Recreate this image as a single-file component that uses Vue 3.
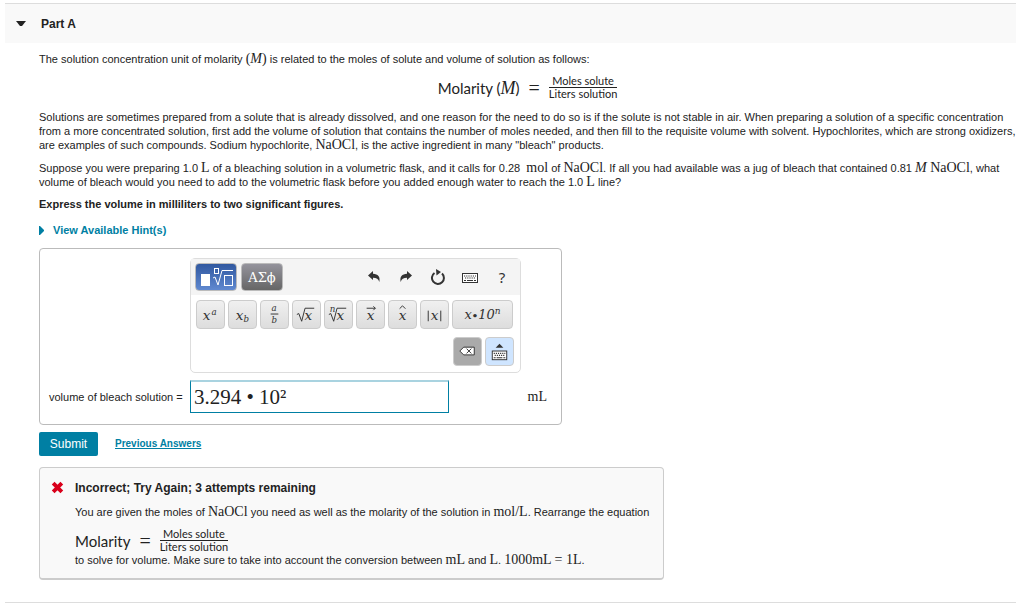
<script setup>
import { ref } from 'vue'

const answer = ref('3.294 • 10²')
</script>

<template>
  <main class="page">
    <header class="part">
      <svg class="part__arrow" viewBox="0 0 10 6" aria-hidden="true">
        <path d="M0 0h10L6 5H4z" fill="#222" />
      </svg>
      <h1 class="part__title">Part A</h1>
    </header>

    <div class="content">
      <p class="text">
        The solution concentration unit of molarity <span class="math">(<i>M</i>)</span> is related to the moles of
        solute and volume of solution as follows:
      </p>

      <div class="equation equation--center">
        <span class="equation__name">Molarity (<i>M</i>)</span>
        <span class="equation__equals">=</span>
        <span class="fraction">
          <span class="fraction__top">Moles solute</span>
          <span class="fraction__bottom">Liters solution</span>
        </span>
      </div>

      <p class="text">
        Solutions are sometimes prepared from a solute that is already dissolved, and one reason for the need to do so
        is if the solute is not stable in air. When preparing a solution of a specific concentration from a more
        concentrated solution, first add the volume of solution that contains the number of moles needed, and then fill
        to the requisite volume with solvent. Hypochlorites, which are strong oxidizers, are examples of such compounds.
        Sodium hypochlorite, <span class="math">NaOCl</span>, is the active ingredient in many "bleach" products.
      </p>

      <p class="text text--spaced">
        Suppose you were preparing 1.0 <span class="math">L</span> of a bleaching solution in a volumetric flask, and it
        calls for 0.28 &nbsp;<span class="math">mol</span> of <span class="math">NaOCl</span>. If all you had available
        was a jug of bleach that contained 0.81 <span class="math"><i>M</i> NaOCl</span>, what volume of bleach would
        you need to add to the volumetric flask before you added enough water to reach the 1.0
        <span class="math">L</span> line?
      </p>

      <p class="text text--bold">Express the volume in milliliters to two significant figures.</p>

      <a class="hints" href="#hints">
        <svg class="hints__arrow" viewBox="0 0 5 9" aria-hidden="true">
          <path d="M0 0h1l4 4v1L1 9H0z" fill="#007fa3" />
        </svg>
        View Available Hint(s)
      </a>

      <section class="answer">
        <div class="palette">
          <div class="palette__bar">
            <button type="button" class="mode mode--active" aria-label="Templates">
              <svg width="40" height="26" viewBox="0 0 40 26">
                <rect x="5" y="10" width="9" height="12" fill="#fff" />
                <g fill="none" stroke="#fff">
                  <rect x="18.500" y="4.500" width="4" height="5" />
                  <path d="M17 14l2-1 3 8 4-14.500h11" />
                  <rect x="28.500" y="11.500" width="8" height="10" />
                </g>
              </svg>
            </button>
            <button type="button" class="mode">ΑΣϕ</button>

            <div class="tools">
              <button type="button" class="tool" aria-label="Undo">
                <svg width="14" height="14" viewBox="0 0 14 14">
                  <path d="M1 5.500L6 1v2.800c5 .2 7.500 3 6.300 8.200C11.500 9.200 9.500 7.800 6 7.800V10z" fill="#333" />
                </svg>
              </button>
              <button type="button" class="tool" aria-label="Redo">
                <svg width="14" height="14" viewBox="0 0 14 14">
                  <path d="M13 5.500L8 1v2.800c-5 .2-7.500 3-6.300 8.200C2.500 9.200 4.500 7.800 8 7.800V10z" fill="#333" />
                </svg>
              </button>
              <button type="button" class="tool" aria-label="Reset">
                <svg width="16" height="16" viewBox="0 0 16 16">
                  <path d="M4.500 4a6 6 0 1 0 7.500.5" fill="none" stroke="#333" stroke-width="2" />
                  <path d="M6 0l5 3-4.500 3.500z" fill="#333" />
                </svg>
              </button>
              <button type="button" class="tool" aria-label="Keyboard shortcuts">
                <svg width="18" height="14" viewBox="0 0 18 14">
                  <rect x="1.500" y="3.500" width="15" height="9" fill="#fff" stroke="#333" />
                  <path d="M3 6h12M4 8h11" stroke="#333" stroke-width="1.200" stroke-dasharray="1.200 1" />
                  <path d="M3 10.500h2M6 10.500h6M13 10.500h2" stroke="#333" stroke-width="1.200" />
                </svg>
              </button>
              <button type="button" class="tool" aria-label="Help">?</button>
            </div>
          </div>

          <div class="palette__keys">
            <button type="button" class="key">
              <svg viewBox="0 0 28 28">
                <text x="6" y="20" class="glyph">x</text>
                <text x="15" y="14" class="glyph glyph--small">a</text>
              </svg>
            </button>
            <button type="button" class="key">
              <svg viewBox="0 0 28 28">
                <text x="7" y="20" class="glyph">x</text>
                <text x="15" y="22" class="glyph glyph--small">b</text>
              </svg>
            </button>
            <button type="button" class="key">
              <svg viewBox="0 0 28 28">
                <text x="11" y="10" class="glyph glyph--small">a</text>
                <path d="M10 13.500h8" stroke="#333" />
                <text x="11" y="23" class="glyph glyph--small">b</text>
              </svg>
            </button>
            <button type="button" class="key">
              <svg viewBox="0 0 28 28">
                <path d="M4 14l2-1 3 8L12.500 7.500H22" fill="none" stroke="#333" />
                <text x="12" y="20" class="glyph">x</text>
              </svg>
            </button>
            <button type="button" class="key">
              <svg viewBox="0 0 28 28">
                <text x="5" y="11" class="glyph glyph--small">n</text>
                <path d="M4 14l2-1 3 8L12.500 7.500H22" fill="none" stroke="#333" />
                <text x="12" y="20" class="glyph">x</text>
              </svg>
            </button>
            <button type="button" class="key">
              <svg viewBox="0 0 28 28">
                <path d="M10 7.500h9M17 5.500l2 2-2 2" fill="none" stroke="#333" />
                <text x="10" y="20" class="glyph">x</text>
              </svg>
            </button>
            <button type="button" class="key">
              <svg viewBox="0 0 28 28">
                <path d="M11 8l3-3 3 3" fill="none" stroke="#333" />
                <text x="10" y="20" class="glyph">x</text>
              </svg>
            </button>
            <button type="button" class="key">
              <svg viewBox="0 0 28 28">
                <path d="M7.500 10v11M20.500 10v11" stroke="#333" />
                <text x="10" y="20" class="glyph">x</text>
              </svg>
            </button>
            <button type="button" class="key key--wide">x<b>•</b>10<sup>n</sup></button>
          </div>

          <div class="palette__keys palette__keys--end">
            <button type="button" class="key key--delete" aria-label="Delete">
              <svg viewBox="0 0 28 28">
                <path d="M6 13.500L10 9.500h11v8H10z" fill="#fff" stroke="#333" />
                <path d="M13 11l5 5M18 11l-5 5" stroke="#333" />
              </svg>
            </button>
            <button type="button" class="key key--keyboard" aria-label="Toggle keyboard">
              <svg viewBox="0 0 28 28">
                <path d="M10 10l4-4 4 4z" fill="#333" />
                <rect x="6.500" y="13.500" width="15" height="9" fill="#fff" stroke="#333" />
                <path d="M8 16h12M9 18h11" stroke="#333" stroke-width="1.200" stroke-dasharray="1.200 1" />
                <path d="M8 20.500h2M11 20.500h6M18 20.500h2" stroke="#333" stroke-width="1.200" />
              </svg>
            </button>
          </div>
        </div>

        <div class="answer__row">
          <label class="answer__label" for="volume">volume of bleach solution =</label>
          <input id="volume" v-model="answer" class="answer__input" type="text" />
          <span class="answer__unit">mL</span>
        </div>
      </section>

      <div class="actions">
        <button type="button" class="submit">Submit</button>
        <a class="previous" href="#previous">Previous Answers</a>
      </div>

      <section class="feedback">
        <svg class="feedback__icon" viewBox="0 0 12 12" aria-hidden="true">
          <path d="M2 2l8 8M10 2l-8 8" stroke="#d9001b" stroke-width="3.600" />
        </svg>
        <div class="feedback__body">
          <h2 class="feedback__title">Incorrect; Try Again; 3 attempts remaining</h2>
          <p class="text">
            You are given the moles of <span class="math">NaOCl</span> you need as well as the molarity of the solution
            in <span class="math">mol/L</span>. Rearrange the equation
          </p>
          <div class="equation equation--feedback">
            <span class="equation__name">Molarity</span>
            <span class="equation__equals">=</span>
            <span class="fraction">
              <span class="fraction__top">Moles solute</span>
              <span class="fraction__bottom">Liters solution</span>
            </span>
          </div>
          <p class="text">
            to solve for volume. Make sure to take into account the conversion between <span class="math">mL</span> and
            <span class="math">L</span>. <span class="math">1000mL = 1L</span>.
          </p>
        </div>
      </section>
    </div>
  </main>
</template>

<style>
body {
  background: #fff;
}
</style>

<style scoped>
.page {
  margin: 3px 8px 0 5px;
  border-top: 1px solid #ddd;
  border-bottom: 1px solid #ddd;
  font-family: 'Liberation Sans', Arial, sans-serif;
  font-size: 11px;
  line-height: 14px;
  color: #222;
}

.page * {
  box-sizing: border-box;
}

.part {
  display: flex;
  align-items: center;
  gap: 15px;
  height: 39px;
  padding-left: 11px;
  background: #f9f9f9;
}

.part__arrow {
  width: 10px;
  height: 6px;
}

.part__title {
  margin: 0;
  font-size: 12px;
}

.content {
  padding: 9px 0 22px 34px;
}

.text {
  margin: 0;
}

.text--spaced {
  margin: 9px 0 8px;
}

.text--bold {
  font-weight: 700;
}

.math {
  font-family: 'Liberation Serif', serif;
  font-size: 14px;
  line-height: 0;
}

.equation {
  display: flex;
  align-items: center;
  font-family: Lato, sans-serif;
}

.equation--center {
  justify-content: center;
  margin: 9px 0 10px;
}

.equation--feedback {
  margin: 9px 0 0;
}

.equation__name {
  font-size: 15px;
}

.equation__name i {
  font-family: 'Liberation Serif', serif;
  font-size: 18px;
  line-height: 0;
}

.equation__equals {
  margin: 0 9px;
  font-family: 'Liberation Serif', serif;
  font-size: 20px;
}

.fraction {
  display: flex;
  flex-direction: column;
  text-align: center;
  line-height: 12px;
}

.fraction__top {
  border-bottom: 1px solid #222;
}

.hints {
  display: flex;
  align-items: center;
  gap: 9px;
  margin: 12px 0 11px;
  color: #007fa3;
  font-weight: 700;
  text-decoration: none;
}

.hints__arrow {
  width: 5px;
  height: 9px;
}

.answer {
  max-width: 523px;
  padding: 9px 9px 11px;
  border: 1px solid #bbb;
  border-radius: 4px;
}

.palette {
  width: 331px;
  margin: 0 0 7px 141px;
  padding-bottom: 6px;
  border: 1px solid #ddd;
  border-radius: 5px;
}

.palette__bar {
  display: flex;
  align-items: center;
  gap: 4px;
  height: 36px;
  padding: 0 2px 0 4px;
  background: #f4f4f4;
}

.mode {
  width: 42px;
  height: 28px;
  padding: 0;
  border: 1px solid #bbb;
  border-radius: 4px;
  background: linear-gradient(#94939c, #666);
  color: #fff;
  font-family: 'DejaVu Serif', serif;
  font-size: 13px;
}

.mode svg,
.tool svg,
.key svg {
  display: block;
  margin: auto;
}

.mode--active {
  background: linear-gradient(#3058a0, #6089d0);
}

.tools {
  display: flex;
  margin-left: auto;
}

.tool {
  width: 32px;
  height: 28px;
  padding: 0;
  border: 0;
  background: none;
  color: #333;
  font-family: 'Noto Sans', sans-serif;
  font-size: 15px;
}

.palette__keys {
  display: flex;
  gap: 3px;
  padding: 5px 5px 0;
}

.palette__keys--end {
  justify-content: flex-end;
  padding: 8px 6px 0;
}

.key {
  width: 29px;
  height: 29px;
  padding: 0;
  border: 1px solid #ccc;
  border-radius: 4px;
  background: linear-gradient(#f0f0f0, #ddd);
  color: #333;
}

.key--wide {
  width: 61px;
  font-family: 'DejaVu Serif', serif;
  font-size: 13px;
  font-style: italic;
}

.key--wide b {
  font-size: 10px;
}

.key--wide sup {
  font-size: 9px;
  line-height: 0;
}

.key--delete {
  background: #aaa;
}

.key--keyboard {
  background: #cfe5ff;
}

.glyph {
  fill: #333;
  font-family: 'DejaVu Serif', serif;
  font-size: 14px;
  font-style: italic;
}

.glyph--small {
  font-size: 9px;
}

.answer__row {
  display: flex;
  align-items: center;
}

.answer__label {
  width: 141px;
}

.answer__input {
  width: 259px;
  height: 33px;
  padding: 0 3px;
  border: 1px solid #007fa3;
  border-top: 2px solid #a9d3e0;
  outline: none;
  color: #222;
  font-family: 'Liberation Serif', serif;
  font-size: 21px;
}

.answer__unit {
  margin-left: auto;
  padding-right: 5px;
  font-family: 'Liberation Serif', serif;
  font-size: 14px;
}

.actions {
  display: flex;
  align-items: center;
  gap: 17px;
  margin: 7px 0 11px;
}

.submit {
  width: 59px;
  height: 24px;
  padding: 0;
  border: 0;
  border-radius: 2px;
  background: #007fa3;
  color: #fff;
  font-family: inherit;
  font-size: 12px;
}

.previous {
  color: #007fa3;
  font-size: 10px;
  font-weight: 700;
}

.feedback {
  display: flex;
  gap: 11px;
  max-width: 625px;
  padding: 13px 11px 11px;
  border: 1px solid #ccc;
  border-bottom-width: 2px;
  border-radius: 4px;
  background: #f9f9f9;
}

.feedback__icon {
  flex: none;
  width: 13px;
  height: 13px;
}

.feedback__title {
  margin: 0 0 10px;
  font-size: 12px;
}
</style>
